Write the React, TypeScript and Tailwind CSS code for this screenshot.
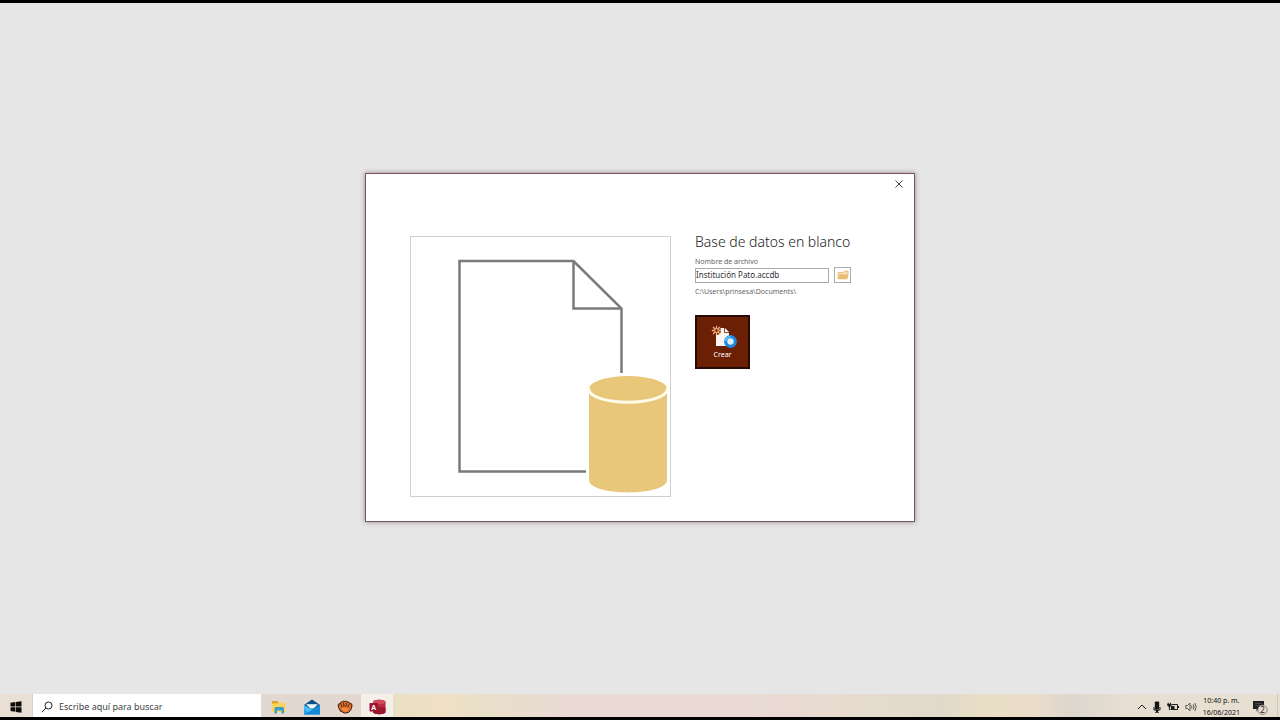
import { useState } from "react";

const BlankDatabaseArt = () => (
  <svg viewBox="0 0 259 259" className="size-full" fill="none" aria-hidden="true">
    <path d="M175 234.500H48.500V24H162.500L210.500 71.500V136" stroke="#7b7b7b" strokeWidth="2.500" />
    <path d="M162.500 24V71.500H210.500" stroke="#7b7b7b" strokeWidth="2.500" />
    <path d="M178 151V243C178 259.500 256 259.500 256 243V151Z" fill="#e8c77b" />
    <ellipse cx="217" cy="151.500" rx="39" ry="12.500" fill="#e8c77b" />
    <path d="M177.500 151C177.500 170 256.500 170 256.500 151" stroke="#fffbe8" strokeWidth="3" />
  </svg>
);

const FolderOpenIcon = () => (
  <svg viewBox="0 0 12 10" className="h-2.5 w-3" aria-hidden="true">
    <path d="M1 9V2.500H6L7.500 1H11V5" fill="#f7dfb4" stroke="#e8b765" strokeWidth="0.800" />
    <path d="M0.800 9.300L2.500 4.500H11.600L10.300 9.300Z" fill="#ebbd70" />
  </svg>
);

const CreateIcon = () => (
  <svg viewBox="0 0 28 24" className="h-6 w-7" fill="none" aria-hidden="true">
    <path d="M7 3H16L20 7V21H7Z" fill="#fbf5f1" />
    <path d="M15.500 3V7.500H20" stroke="#6b1f04" strokeWidth="0.800" />
    <circle cx="7.500" cy="5.500" r="4.500" fill="#6b1f04" />
    <path
      d="M7.500 0.800V10.200M2.800 5.500H12.200M4 2L11 9M11 2L4 9"
      stroke="#efb07c"
      strokeWidth="1.300"
    />
    <circle cx="7.500" cy="5.500" r="1.800" fill="#6b1f04" stroke="#efb07c" />
    <circle cx="21.500" cy="16.500" r="4.800" stroke="#1f86e0" strokeWidth="3.200" fill="#d9eefb" />
    <path d="M16.700 16A4.800 4.800 0 0 1 21.500 11.700" stroke="#5db6f5" strokeWidth="2.500" />
  </svg>
);

const WindowsIcon = () => (
  <svg viewBox="0 0 12 12" className="size-3" fill="#0c0c0c" aria-hidden="true">
    <path d="M0.500 1.800L5.300 1.100V5.600H0.500ZM5.900 1L11.500 0.200V5.600H5.900ZM0.500 6.300H5.300V10.800L0.500 10.100ZM5.900 6.300H11.500V11.700L5.900 10.900Z" />
  </svg>
);

const SearchIcon = () => (
  <svg viewBox="0 0 12 12" className="size-3" fill="none" stroke="#222" aria-hidden="true">
    <circle cx="7.500" cy="4.500" r="3.500" />
    <path d="M5 7L0.800 11.200" />
  </svg>
);

const ExplorerIcon = () => (
  <svg viewBox="0 0 16 14" className="h-3.5 w-4" aria-hidden="true">
    <path d="M1 1H6L7.500 2.500H14.500V12H1Z" fill="#fbd45e" />
    <path d="M1 1H6L7.500 2.500L6.500 3.500H1Z" fill="#dca32f" />
    <path d="M3.500 13.500V8.500Q3.500 7 5 7H11.500Q13 7 13 8.500V13.500H10.500V10.500H6V13.500Z" fill="#3d9cc9" />
  </svg>
);

const MailIcon = () => (
  <svg viewBox="0 0 18 16" className="h-4 w-4.5" aria-hidden="true">
    <path d="M1 6L9 0.500L17 6V10H1Z" fill="#0a4f8c" />
    <path d="M3 5.200H15L10.500 9.500H7.500Z" fill="#f7fbfd" />
    <path d="M1 6L9 10.500L17 6V15.500H1Z" fill="#28a7ea" />
    <path d="M1 15.500L17 6V15.500Z" fill="#1789d3" />
    <path d="M1 6L9 10.500L11 9.600L5 13.200L1 10Z" fill="#45bdf3" />
  </svg>
);

const GloveIcon = () => (
  <svg viewBox="0 0 16 14" className="h-3.5 w-4" strokeLinecap="round" strokeLinejoin="round" aria-hidden="true">
    <path
      d="M3.500 11Q0.500 7 1.200 4.500Q2 3 3.200 4Q3.500 1.500 5.200 1.800Q6.500 0.500 7.800 1.500Q9.500 0.500 10.500 2Q12.500 1.500 12.700 3.500Q15.500 3 15 6Q14.500 10 11.500 12.500Q7.500 14.500 3.500 11Z"
      fill="#e0702f"
      stroke="#3b1a10"
      strokeWidth="1"
    />
    <path d="M4 4.500L5 7M6.500 3L7 6.500M9.300 3L9 6.500M12 4.500L11 7" stroke="#4a1f12" strokeWidth="0.900" fill="none" />
    <path d="M4.500 8.500Q8 6.500 11.500 8.500L10 11Q8 12.500 6 11Z" fill="#f08a3e" />
  </svg>
);

const AccessIcon = () => (
  <svg viewBox="0 0 17 16" className="h-4 w-[17px]" aria-hidden="true">
    <path d="M4 3C4 0 16.500 0 16.500 3V13C16.500 16 4 16 4 13Z" fill="#b8293d" />
    <path d="M4 8.500H16.500V13C16.500 16 4 16 4 13Z" fill="#98192e" />
    <path d="M4 3C4 0 16.500 0 16.500 3C16.500 6 4 6 4 3Z" fill="#d04a5b" />
    <rect x="0.500" y="4" width="8.500" height="8.500" rx="0.700" fill="#9d142d" />
    <text x="4.700" y="10.700" textAnchor="middle" fontSize="7" fontWeight="700" fontFamily="Noto Sans, sans-serif" fill="#fff">
      A
    </text>
  </svg>
);

const ChevronUpIcon = () => (
  <svg viewBox="0 0 10 6" className="h-1.5 w-2.5" fill="none" stroke="#222" aria-hidden="true">
    <path d="M1 5L5 1L9 5" />
  </svg>
);

const MicIcon = () => (
  <svg viewBox="0 0 8 12" className="h-3 w-2" fill="#161616" aria-hidden="true">
    <rect x="1.800" y="0.500" width="4.400" height="8" rx="1" />
    <path d="M0.500 6H1.500V8.500H6.500V6H7.500V9L5 10V11H6V11.800H2V11H3V10L0.500 9Z" />
  </svg>
);

const BatteryIcon = () => (
  <svg viewBox="0 0 12 10" className="h-2.5 w-3" fill="none" stroke="#1c1c1c" aria-hidden="true">
    <path d="M5 2.500H10.500V7.500H3.500" />
    <path d="M11.500 4V6" />
    <path d="M1.200 0.800V2.500M3.500 0.800V2.500" />
    <path d="M0.500 2H4.300V3.500L2.400 5.200L0.500 3.500Z" fill="#1c1c1c" strokeWidth="0.500" />
    <path d="M2.400 5V8" />
    <path d="M4 5.500H7.500" strokeWidth="3" />
  </svg>
);

const VolumeIcon = () => (
  <svg viewBox="0 0 12 10" className="h-2.5 w-3" fill="none" stroke="#333" strokeWidth="0.800" aria-hidden="true">
    <path d="M0.800 3.500H2.500L5 1.200V8.800L2.500 6.500H0.800Z" />
    <path d="M6.500 3.500Q7.500 5 6.500 6.500M8.200 2.300Q10 5 8.200 7.700M9.900 1Q12.500 5 9.900 9" />
  </svg>
);

const NotificationIcon = () => (
  <svg viewBox="0 0 16 16" className="size-4" aria-hidden="true">
    <path d="M1 2H12V10H6.500L4.500 12.500V10H1Z" fill="#1f1f1f" />
    <path d="M3 4.500H10M3 6.500H10" stroke="#555" strokeWidth="0.800" />
    <circle cx="10.500" cy="10.800" r="4.700" fill="#e2dbd0" stroke="#77736d" strokeWidth="0.800" />
    <text x="10.500" y="13.700" textAnchor="middle" fontSize="8" fontFamily="Noto Sans, sans-serif" fill="#222">
      2
    </text>
  </svg>
);

const BlankDatabaseDialog = () => {
  const [fileName, setFileName] = useState("Institución Pato.accdb");

  return (
    <section
      role="dialog"
      aria-labelledby="dialog-title"
      className="w-[550px] border border-[#77545c] bg-white shadow-[0_0_5px_rgba(70,40,45,0.5)]"
    >
      <div className="flex h-[62px] items-start justify-end px-[7px] pt-0.5">
        <button type="button" aria-label="Cerrar" className="p-1">
          <svg viewBox="0 0 8 8" className="size-2" stroke="#444" aria-hidden="true">
            <path d="M0.500 0.500L7.500 7.500M7.500 0.500L0.500 7.500" />
          </svg>
        </button>
      </div>
      <div className="flex gap-6 px-11 pb-6">
        <div className="size-[261px] shrink-0 border border-[#cfcfcf]">
          <BlankDatabaseArt />
        </div>
        <form className="flex flex-col items-start" onSubmit={(e) => e.preventDefault()}>
          <h1 id="dialog-title" className="text-[14px] leading-3 font-light whitespace-nowrap text-[#222]">
            Base de datos en blanco
          </h1>
          <label htmlFor="file-name" className="mt-2 text-[7px] leading-[11px] text-[#666]">
            Nombre de archivo
          </label>
          <div className="flex items-center gap-[5px]">
            <input
              id="file-name"
              value={fileName}
              onChange={(e) => setFileName(e.target.value)}
              className="h-[15px] w-[134px] border border-[#ababab] pb-0.5 text-[8px] text-[#333] outline-none"
            />
            <button
              type="button"
              aria-label="Buscar ubicación"
              className="flex h-4 w-[17px] items-center justify-center border border-[#ababab]"
            >
              <FolderOpenIcon />
            </button>
          </div>
          <p className="mt-[3px] text-[7px] leading-3 text-[#666]">C:\Users\prinsesa\Documents\</p>
          <button
            type="submit"
            className="mt-[17px] flex h-[54px] w-[55px] flex-col items-center border-2 border-[#260a05] bg-[#6b1f04] pt-2 text-[7px] leading-3 text-white"
          >
            <CreateIcon />
            Crear
          </button>
        </form>
      </div>
    </section>
  );
};

const Taskbar = () => (
  <footer className="flex h-[23px] shrink-0 bg-[#eadfd5]">
    <button type="button" aria-label="Inicio" className="flex w-8 items-center justify-center pt-0.5">
      <WindowsIcon />
    </button>
    <label className="flex w-[229px] items-center gap-1.5 border-l border-[#d5d0cb] bg-white pt-0.5 pl-2">
      <SearchIcon />
      <input
        type="search"
        aria-label="Buscar"
        placeholder="Escribe aquí para buscar"
        className="min-w-0 flex-1 text-[9px] outline-none placeholder:text-[#444]"
      />
    </label>
    <nav className="flex bg-[#e3d8cf] pl-0.5">
      <button type="button" aria-label="Explorador de archivos" className="flex w-8 items-center justify-center pt-0.5">
        <ExplorerIcon />
      </button>
      <button type="button" aria-label="Correo" className="flex w-[34px] items-center justify-center pt-0.5">
        <MailIcon />
      </button>
      <button type="button" aria-label="Juego" className="flex w-8 items-center justify-center pt-0.5">
        <GloveIcon />
      </button>
      <button type="button" aria-label="Access" className="flex w-8 items-center justify-center bg-[#f4efe8] pt-0.5">
        <AccessIcon />
      </button>
    </nav>
    <div className="flex-1 bg-[linear-gradient(90deg,#e9e0c4,#f0dfc4_6%,#e9e0c8_12%,#e9dad5_24%,#e9dad5_48%,#e8dbd0_60%,#e0dacc_74%,#e9dec4_80%,#e9dccb_88%,#dcd6cd_92%,#e8dfd3)]" />
    <div className="flex items-center gap-1.5 bg-[#e8dfd3] pt-0.5 pl-2">
      <button type="button" aria-label="Mostrar iconos ocultos">
        <ChevronUpIcon />
      </button>
      <MicIcon />
      <BatteryIcon />
      <VolumeIcon />
      <time dateTime="2021-06-16T22:40" className="text-center text-[7px] leading-3 whitespace-nowrap text-[#111]">
        <span className="block">10:40 p. m.</span>
        <span className="block">16/06/2021</span>
      </time>
      <button type="button" aria-label="Notificaciones" className="mr-[3px] ml-1.5">
        <NotificationIcon />
      </button>
    </div>
    <button type="button" aria-label="Mostrar escritorio" className="w-[9px] bg-[#e8dfd3] pl-1.5">
      <span className="block h-full border-l border-[#cfc8be]" />
    </button>
  </footer>
);

export default function App() {
  return (
    <div className="flex min-h-screen flex-col border-y-3 border-black bg-[#e6e6e6] font-['Noto_Sans','Open_Sans',sans-serif]">
      <main className="flex flex-1 items-center justify-center pb-0.5">
        <BlankDatabaseDialog />
      </main>
      <Taskbar />
    </div>
  );
}
